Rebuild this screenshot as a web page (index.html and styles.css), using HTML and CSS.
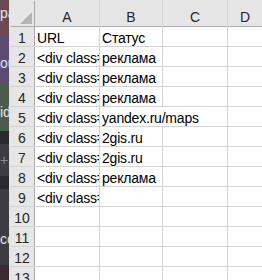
FILE: index.html
```html
<!DOCTYPE html>
<html lang="ru">
<head>
  <meta charset="UTF-8">
  <title>Лист1</title>
  <link rel="stylesheet" href="styles.css">
</head>
<body>
  <div class="screen">
    <div class="dock">
      <div class="band brown">pa</div>
      <div class="band purple">ou</div>
      <div class="band green">id</div>
      <div class="band dark"></div>
      <div class="band gray plus">+</div>
      <div class="band dark"></div>
      <div class="band gray low">co</div>
      <div class="band wine"></div>
    </div>

    <div class="sheet">
      <div class="corner"><span class="tri"></span></div>
      <div class="colhead">A</div>
      <div class="colhead">B</div>
      <div class="colhead">C</div>
      <div class="colhead">D</div>

      <div class="rowhead">1</div>
      <div class="cell">URL</div>
      <div class="cell">Статус</div>
      <div class="cell"></div>
      <div class="cell"></div>

      <div class="rowhead">2</div>
      <div class="cell">&lt;div class="</div>
      <div class="cell">реклама</div>
      <div class="cell"></div>
      <div class="cell"></div>

      <div class="rowhead">3</div>
      <div class="cell">&lt;div class="</div>
      <div class="cell">реклама</div>
      <div class="cell"></div>
      <div class="cell"></div>

      <div class="rowhead">4</div>
      <div class="cell">&lt;div class="</div>
      <div class="cell">реклама</div>
      <div class="cell"></div>
      <div class="cell"></div>

      <div class="rowhead">5</div>
      <div class="cell">&lt;div class="</div>
      <div class="cell wide">yandex.ru/maps</div>
      <div class="cell"></div>

      <div class="rowhead">6</div>
      <div class="cell">&lt;div class="</div>
      <div class="cell">2gis.ru</div>
      <div class="cell"></div>
      <div class="cell"></div>

      <div class="rowhead">7</div>
      <div class="cell">&lt;div class="</div>
      <div class="cell">2gis.ru</div>
      <div class="cell"></div>
      <div class="cell"></div>

      <div class="rowhead">8</div>
      <div class="cell">&lt;div class="</div>
      <div class="cell">реклама</div>
      <div class="cell"></div>
      <div class="cell"></div>

      <div class="rowhead">9</div>
      <div class="cell">&lt;div class="</div>
      <div class="cell"></div>
      <div class="cell"></div>
      <div class="cell"></div>

      <div class="rowhead">10</div>
      <div class="cell"></div>
      <div class="cell"></div>
      <div class="cell"></div>
      <div class="cell"></div>

      <div class="rowhead">11</div>
      <div class="cell"></div>
      <div class="cell"></div>
      <div class="cell"></div>
      <div class="cell"></div>

      <div class="rowhead">12</div>
      <div class="cell"></div>
      <div class="cell"></div>
      <div class="cell"></div>
      <div class="cell"></div>

      <div class="rowhead">13</div>
      <div class="cell"></div>
      <div class="cell"></div>
      <div class="cell"></div>
      <div class="cell"></div>
    </div>
  </div>
</body>
</html>
```

FILE: styles.css
```css
* {
  box-sizing: border-box;
}

body {
  margin: 0;
  background: #ffffff;
  font-family: "Liberation Sans", Arial, sans-serif;
  font-size: 14px;
  color: #000;
}

.screen {
  display: flex;
  width: 262px;
  height: 280px;
  overflow: hidden;
}

/* тёмная полоса слева (окно за Excel) */
.dock {
  width: 10px;
  flex: none;
  display: flex;
  flex-direction: column;
  overflow: hidden;
  border-right: 1px solid #e2e2e2;
}

.band {
  flex: none;
  color: #e4e4e4;
  font-size: 14px;
  line-height: 16px;
  white-space: nowrap;
  overflow: hidden;
}

.brown  { height: 35px; background: #6b4b53; padding-top: 5px; }
.purple { height: 48px; background: #5e4b72; padding-top: 20px; }
.green  { height: 48px; background: #4c5b4c; padding-top: 21px; }
.dark   { height: 13px; background: #2a2a2e; }
.gray   { background: #3c3c41; }
.plus   { height: 32px; padding-top: 8px; color: #8d8d92; }
.low    { height: 76px; padding-top: 42px; }
.wine   { height: 30px; background: #3c2a31; }

.sheet {
  flex: 1;
  display: grid;
  grid-template-columns: 24px 64px 62px 64px 1fr;
  grid-template-rows: 26px repeat(13, 19px);
  gap: 1px;
  background: #d4d4d4;
  align-content: start;
}

.corner,
.colhead,
.rowhead {
  background: #e6e6e6;
  color: #262626;
}

.corner {
  position: relative;
  box-shadow: 1px 1px 0 #ababab;
}

.tri {
  position: absolute;
  right: 2px;
  bottom: 2px;
  width: 0;
  height: 0;
  border-left: 12px solid transparent;
  border-bottom: 12px solid #b5b5b5;
}

.colhead {
  text-align: center;
  padding-top: 9px;
  line-height: 16px;
  box-shadow: 0 1px 0 #ababab;
}

.rowhead {
  text-align: center;
  padding-top: 3px;
  line-height: 16px;
  box-shadow: 1px 0 0 #ababab;
}

.cell {
  background: #fff;
  padding: 3px 0 0 2px;
  line-height: 16px;
  letter-spacing: -0.2px;
  white-space: nowrap;
  overflow: hidden;
}

/* текст перетекает в пустую соседнюю ячейку */
.wide {
  grid-column: span 2;
}
```
